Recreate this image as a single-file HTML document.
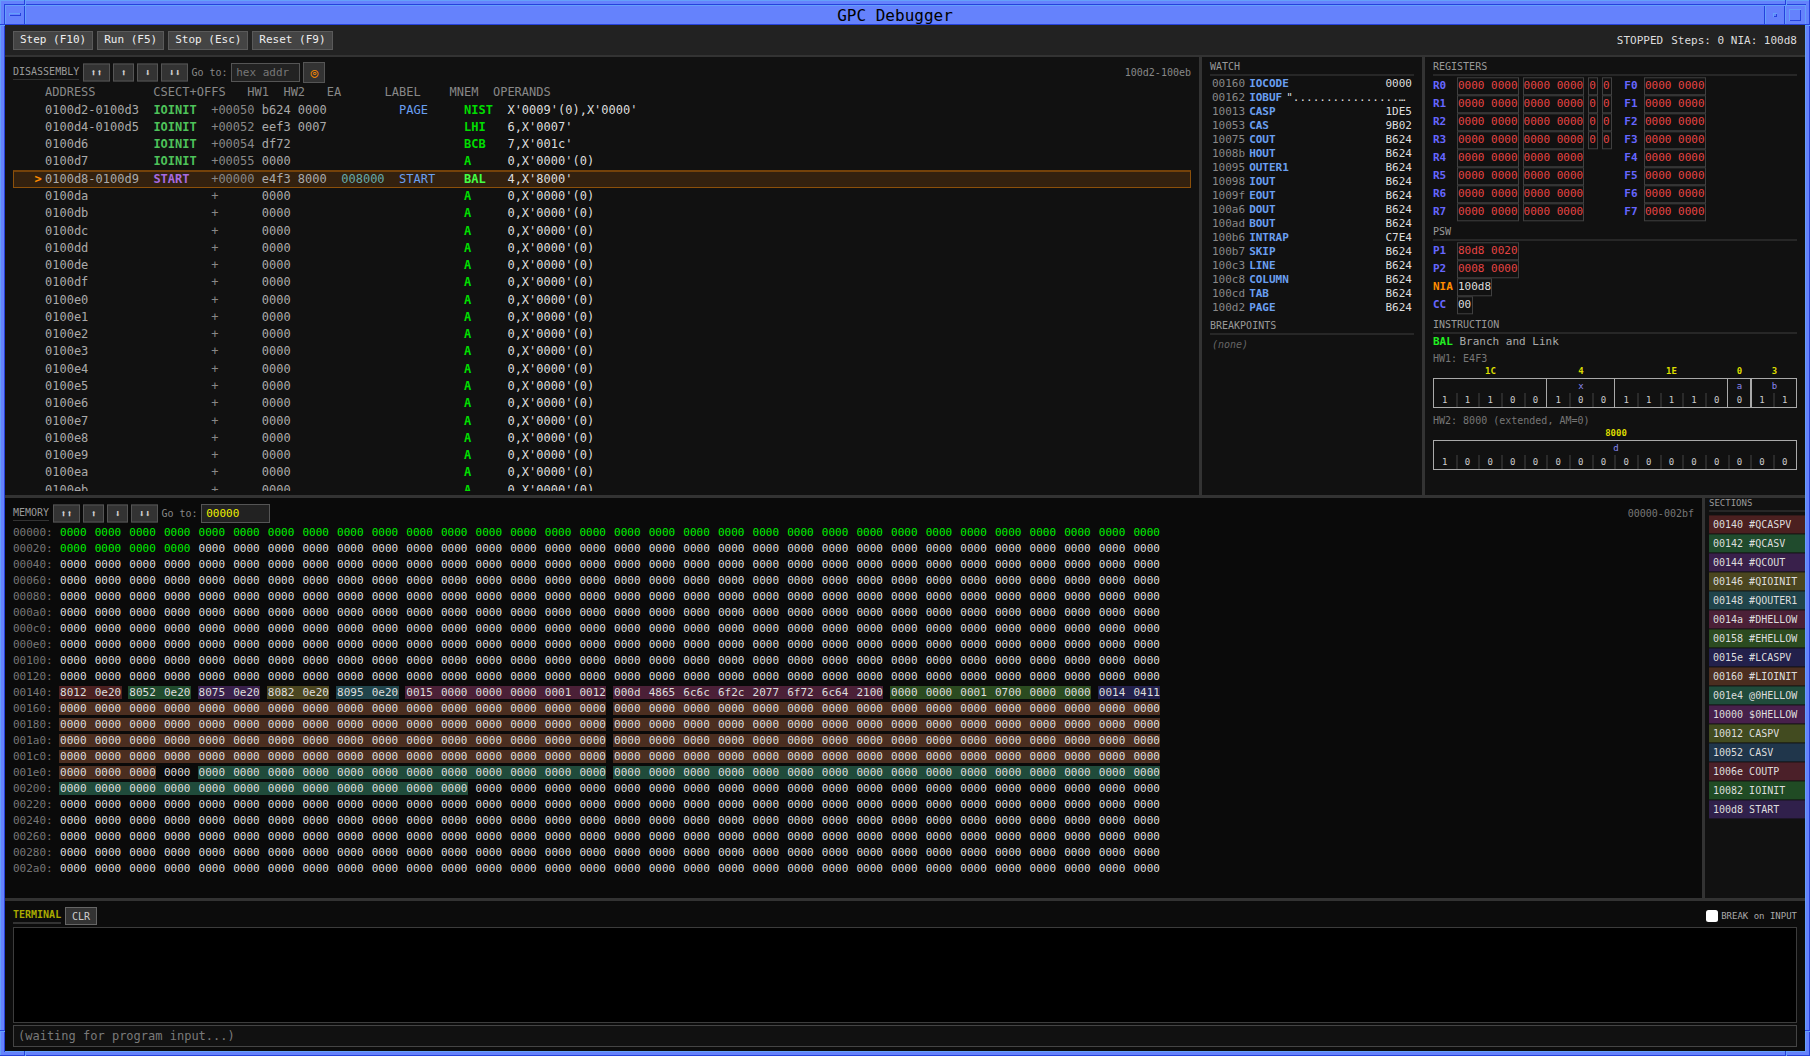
<!DOCTYPE html><html><head><meta charset="utf-8"><title>GPC Debugger</title><style>
*{box-sizing:border-box;margin:0;padding:0}
html,body{width:1810px;height:1056px;overflow:hidden}
body{background:#6582fc;font-family:"DejaVu Sans Mono","Liberation Mono",monospace;font-size:11px;color:#ddd;position:relative}
.abs{position:absolute}
/* window frame */
.fr{position:absolute}
#title{position:absolute;left:25px;top:6px;width:1740px;height:18px;line-height:20px;text-align:center;font-size:16px;color:#000;white-space:pre;overflow:hidden}
#app{position:absolute;left:5px;top:25px;width:1800px;height:1026px;background:#111;overflow:hidden}
#tb{position:absolute;left:0;top:0;width:1800px;height:32px;background:#222;border-bottom:2px solid #333}
.btn{position:absolute;top:6px;height:19px;line-height:15px;background:#444;border:1px solid #5a5a5a;color:#eee;font-size:11px;text-align:center;white-space:pre}
#status{position:absolute;right:8px;top:0;height:30px;line-height:32px;font-size:11px;color:#ddd;white-space:pre}
.pane{position:absolute;overflow:hidden;background:#111}
.ttl{position:absolute;font-size:10px;color:#999;white-space:pre;line-height:12px;margin-top:1px}
.ul{position:absolute;height:2px;background:#272727;margin-top:-1px}
.hp{transform:translateY(0.5px)}
.ul1{position:absolute;height:1px;background:#333}
.sb{position:absolute;height:18px;line-height:16px;background:#333;border:1px solid #555;color:#d0d0d0;font-size:10px;text-align:center;white-space:pre}
.lbl{position:absolute;font-size:10px;color:#888;white-space:pre;line-height:12px}
.inp{position:absolute;height:19px;line-height:17px;background:#222;border:1px solid #555;font-size:11px;color:#777;padding-left:4px;white-space:pre}
/* disassembly */
#dh{position:absolute;left:8px;top:27px;height:17px;line-height:17px;font-size:12px;color:#888;white-space:pre}
.dr{position:absolute;left:8px;width:1178px;height:17.28px;line-height:17.28px;font-size:12px;white-space:pre;color:#ccc}
.dr .t{position:absolute;left:32px;top:0}
.dr .m{position:absolute;left:21.5px;top:0;color:#ff8c00;font-weight:bold}
.a{color:#aaa}.o{color:#888}.h{color:#aaa}.ea{color:#6aa}.lb{color:#6a9ff0}.mn{color:#00dd00;font-weight:bold}.op{color:#ddd}
.cg{color:#4ec25a;font-weight:bold}.cp{color:#a76be0;font-weight:bold}
#cur{position:absolute;left:8px;top:113px;width:1178px;height:18px;background:#33210f;border:1px solid #8c500a;border-top:2px solid #74420a}
/* watch */
.wr{transform:translateY(0.3px);position:absolute;left:10px;width:200px;height:14px;line-height:14px;font-size:11px;white-space:pre}
.wa{color:#888}.wn{color:#6a9ff0;font-weight:bold}.wv{position:absolute;right:0;top:0;color:#ddd}
/* regs */
.rl{transform:translateY(0.3px);position:absolute;font-size:11px;font-weight:bold;color:#6666ff;line-height:18px;height:18px;white-space:pre}
.rb{transform:translateY(0.3px);position:absolute;height:18px;line-height:16px;border:1px solid #404040;color:#e64444;font-size:11px;white-space:pre;text-align:left;overflow:hidden}
.bt{position:absolute;border:1px solid #aaa}
.bv{position:absolute;font-size:9px;font-weight:bold;color:#dddd00;line-height:12px;text-align:center;white-space:pre}
.fn{position:absolute;font-size:9px;color:#8888ee;line-height:12px;text-align:center}
.bit{position:absolute;font-size:9px;color:#ccc;line-height:12px;text-align:center;width:22.66px}
.fs{position:absolute;width:1px;background:#aaa}
.tk{position:absolute;width:2px;background:#2a2a2a}
/* memory */
#mem{background:#0a0a0a}
.mr{position:absolute;left:8px;height:16px;line-height:16px;font-size:11px;white-space:pre;color:#ddd}
.ma{color:#777}
.w{padding:0 7.135px 0 1px;background-repeat:no-repeat}
.g{color:#00f000}
/* sections */
.sec{transform:translateY(0.4px);position:absolute;left:4px;width:110px;height:18px;line-height:20px;overflow:hidden;font-size:10px;color:#ddd;padding-left:4px;white-space:pre}
</style></head><body>
<div class="fr" style="left:0px;top:0px;width:1810px;height:1px;background:#64a0fa"></div>
<div class="fr" style="left:0px;top:0px;width:1px;height:1056px;background:#64a0fa"></div>
<div class="fr" style="left:1809px;top:0px;width:1px;height:1056px;background:#2642dc"></div>
<div class="fr" style="left:0px;top:1055px;width:1810px;height:1px;background:#2642dc"></div>
<div class="fr" style="left:4px;top:4px;width:1802px;height:1px;background:#2642dc"></div>
<div class="fr" style="left:4px;top:4px;width:1px;height:1048px;background:#2642dc"></div>
<div class="fr" style="left:1805px;top:5px;width:1px;height:1047px;background:#64a0fa"></div>
<div class="fr" style="left:5px;top:1051px;width:1801px;height:1px;background:#64a0fa"></div>
<div class="fr" style="left:5px;top:24px;width:1800px;height:1px;background:#2642dc"></div>
<div class="fr" style="left:0px;top:24px;width:5px;height:1px;background:#2642dc"></div>
<div class="fr" style="left:24px;top:0px;width:1px;height:5px;background:#2642dc"></div>
<div class="fr" style="left:1805px;top:24px;width:5px;height:1px;background:#2642dc"></div>
<div class="fr" style="left:1785px;top:0px;width:1px;height:5px;background:#2642dc"></div>
<div class="fr" style="left:0px;top:1030px;width:5px;height:1px;background:#2642dc"></div>
<div class="fr" style="left:0px;top:1031px;width:5px;height:1px;background:#64a0fa"></div>
<div class="fr" style="left:24px;top:1051px;width:1px;height:5px;background:#2642dc"></div>
<div class="fr" style="left:25px;top:1052px;width:1px;height:4px;background:#64a0fa"></div>
<div class="fr" style="left:1805px;top:1030px;width:5px;height:1px;background:#2642dc"></div>
<div class="fr" style="left:1806px;top:1031px;width:4px;height:1px;background:#64a0fa"></div>
<div class="fr" style="left:1785px;top:1051px;width:1px;height:5px;background:#2642dc"></div>
<div class="fr" style="left:1786px;top:1052px;width:1px;height:4px;background:#64a0fa"></div>
<div class="fr" style="left:0px;top:25px;width:5px;height:1px;background:#64a0fa"></div>
<div class="fr" style="left:25px;top:0px;width:1px;height:5px;background:#64a0fa"></div>
<div class="fr" style="left:1786px;top:0px;width:1px;height:5px;background:#64a0fa"></div>
<div class="fr" style="left:1806px;top:25px;width:4px;height:1px;background:#64a0fa"></div>
<div class="fr" style="left:24px;top:5px;width:1px;height:19px;background:#2642dc"></div>
<div class="fr" style="left:25px;top:5px;width:1px;height:19px;background:#64a0fa"></div>
<div class="fr" style="left:1764px;top:5px;width:1px;height:19px;background:#2642dc"></div>
<div class="fr" style="left:1765px;top:5px;width:1px;height:19px;background:#64a0fa"></div>
<div class="fr" style="left:1784px;top:5px;width:1px;height:19px;background:#2642dc"></div>
<div class="fr" style="left:1785px;top:5px;width:1px;height:19px;background:#64a0fa"></div>
<div class="fr" style="left:5px;top:5px;width:1800px;height:1px;background:#64a0fa"></div>
<div class="fr" style="left:5px;top:5px;width:1px;height:19px;background:#64a0fa"></div>
<div class="fr" style="left:9px;top:13px;width:11px;height:1px;background:#64a0fa"></div>
<div class="fr" style="left:9px;top:13px;width:1px;height:3px;background:#64a0fa"></div>
<div class="fr" style="left:10px;top:15px;width:11px;height:1px;background:#2642dc"></div>
<div class="fr" style="left:20px;top:13px;width:1px;height:3px;background:#2642dc"></div>
<div class="fr" style="left:1773px;top:13px;width:4px;height:1px;background:#64a0fa"></div>
<div class="fr" style="left:1773px;top:13px;width:1px;height:4px;background:#64a0fa"></div>
<div class="fr" style="left:1774px;top:16px;width:3px;height:1px;background:#2642dc"></div>
<div class="fr" style="left:1776px;top:14px;width:1px;height:3px;background:#2642dc"></div>
<div class="fr" style="left:1789px;top:9px;width:12px;height:1px;background:#64a0fa"></div>
<div class="fr" style="left:1789px;top:9px;width:1px;height:12px;background:#64a0fa"></div>
<div class="fr" style="left:1790px;top:20px;width:11px;height:1px;background:#2642dc"></div>
<div class="fr" style="left:1800px;top:10px;width:1px;height:11px;background:#2642dc"></div>
<div id="title">GPC Debugger</div>
<div id="app">
<div id="tb">
<div class="btn" style="left:8px;width:80.2px">Step (F10)</div>
<div class="btn" style="left:92.2px;width:67px">Run (F5)</div>
<div class="btn" style="left:163.2px;width:80.2px">Stop (Esc)</div>
<div class="btn" style="left:247.4px;width:80.2px">Reset (F9)</div>
<div id="status"><span style="margin-right:8px">STOPPED</span><span>Steps: 0 NIA: 100d8</span></div>
</div>
<div class="pane" id="dis" style="left:0;top:32px;width:1194px;height:438px">
<div class="ttl" style="left:8px;top:8px">DISASSEMBLY</div><div class="ul1" style="left:8px;top:22px;width:66px"></div>
<div class="sb hp" style="left:78px;top:6px;width:26.6px">⬆⬆</div>
<div class="sb hp" style="left:108.3px;top:6px;width:20.5px">⬆</div>
<div class="sb hp" style="left:132.2px;top:6px;width:20.5px">⬇</div>
<div class="sb hp" style="left:156.2px;top:6px;width:26.6px">⬇⬇</div>
<div class="lbl" style="left:186.5px;top:10px">Go to:</div>
<div class="inp" style="left:226.2px;top:6px;width:69px">hex addr</div>
<div class="sb" style="left:298.3px;top:5px;width:22px;height:21px;line-height:19px;color:#ff8c00;font-size:13px">◎</div>
<div class="lbl" style="right:8px;top:10px">100d2-100eb</div>
<div id="dh"><span style="position:absolute;left:32px">ADDRESS        CSECT+OFFS   HW1  HW2   EA      LABEL    MNEM  OPERANDS</span></div>
<div class="abs" style="left:0;top:0;width:1194px;height:434px;overflow:hidden">
<div id="cur"></div>
<div class="dr" style="top:44.60px"><span class="t"><span class="a">0100d2-0100d3  </span><span class="cg">IOINIT  </span><span class="o">+00050 </span><span class="h">b624 0000  </span><span class="ea">        </span><span class="lb">PAGE     </span><span class="mn">NIST  </span><span class="op">X'0009'(0),X'0000'</span></span></div>
<div class="dr" style="top:61.87px"><span class="t"><span class="a">0100d4-0100d5  </span><span class="cg">IOINIT  </span><span class="o">+00052 </span><span class="h">eef3 0007  </span><span class="ea">        </span><span class="lb">         </span><span class="mn">LHI   </span><span class="op">6,X'0007'</span></span></div>
<div class="dr" style="top:79.14px"><span class="t"><span class="a">0100d6         </span><span class="cg">IOINIT  </span><span class="o">+00054 </span><span class="h">df72       </span><span class="ea">        </span><span class="lb">         </span><span class="mn">BCB   </span><span class="op">7,X'001c'</span></span></div>
<div class="dr" style="top:96.42px"><span class="t"><span class="a">0100d7         </span><span class="cg">IOINIT  </span><span class="o">+00055 </span><span class="h">0000       </span><span class="ea">        </span><span class="lb">         </span><span class="mn">A     </span><span class="op">0,X'0000'(0)</span></span></div>
<div class="dr" style="top:113.69px"><span class="m">&gt;</span><span class="t"><span class="a">0100d8-0100d9  </span><span class="cp">START   </span><span class="o">+00000 </span><span class="h">e4f3 8000  </span><span class="ea">008000  </span><span class="lb">START    </span><span class="mn" style="color:#44ff44">BAL   </span><span class="op">4,X'8000'</span></span></div>
<div class="dr" style="top:130.96px"><span class="t"><span class="a">0100da         </span><span class="cg">        </span><span class="o">+      </span><span class="h">0000       </span><span class="ea">        </span><span class="lb">         </span><span class="mn">A     </span><span class="op">0,X'0000'(0)</span></span></div>
<div class="dr" style="top:148.23px"><span class="t"><span class="a">0100db         </span><span class="cg">        </span><span class="o">+      </span><span class="h">0000       </span><span class="ea">        </span><span class="lb">         </span><span class="mn">A     </span><span class="op">0,X'0000'(0)</span></span></div>
<div class="dr" style="top:165.50px"><span class="t"><span class="a">0100dc         </span><span class="cg">        </span><span class="o">+      </span><span class="h">0000       </span><span class="ea">        </span><span class="lb">         </span><span class="mn">A     </span><span class="op">0,X'0000'(0)</span></span></div>
<div class="dr" style="top:182.78px"><span class="t"><span class="a">0100dd         </span><span class="cg">        </span><span class="o">+      </span><span class="h">0000       </span><span class="ea">        </span><span class="lb">         </span><span class="mn">A     </span><span class="op">0,X'0000'(0)</span></span></div>
<div class="dr" style="top:200.05px"><span class="t"><span class="a">0100de         </span><span class="cg">        </span><span class="o">+      </span><span class="h">0000       </span><span class="ea">        </span><span class="lb">         </span><span class="mn">A     </span><span class="op">0,X'0000'(0)</span></span></div>
<div class="dr" style="top:217.32px"><span class="t"><span class="a">0100df         </span><span class="cg">        </span><span class="o">+      </span><span class="h">0000       </span><span class="ea">        </span><span class="lb">         </span><span class="mn">A     </span><span class="op">0,X'0000'(0)</span></span></div>
<div class="dr" style="top:234.59px"><span class="t"><span class="a">0100e0         </span><span class="cg">        </span><span class="o">+      </span><span class="h">0000       </span><span class="ea">        </span><span class="lb">         </span><span class="mn">A     </span><span class="op">0,X'0000'(0)</span></span></div>
<div class="dr" style="top:251.86px"><span class="t"><span class="a">0100e1         </span><span class="cg">        </span><span class="o">+      </span><span class="h">0000       </span><span class="ea">        </span><span class="lb">         </span><span class="mn">A     </span><span class="op">0,X'0000'(0)</span></span></div>
<div class="dr" style="top:269.14px"><span class="t"><span class="a">0100e2         </span><span class="cg">        </span><span class="o">+      </span><span class="h">0000       </span><span class="ea">        </span><span class="lb">         </span><span class="mn">A     </span><span class="op">0,X'0000'(0)</span></span></div>
<div class="dr" style="top:286.41px"><span class="t"><span class="a">0100e3         </span><span class="cg">        </span><span class="o">+      </span><span class="h">0000       </span><span class="ea">        </span><span class="lb">         </span><span class="mn">A     </span><span class="op">0,X'0000'(0)</span></span></div>
<div class="dr" style="top:303.68px"><span class="t"><span class="a">0100e4         </span><span class="cg">        </span><span class="o">+      </span><span class="h">0000       </span><span class="ea">        </span><span class="lb">         </span><span class="mn">A     </span><span class="op">0,X'0000'(0)</span></span></div>
<div class="dr" style="top:320.95px"><span class="t"><span class="a">0100e5         </span><span class="cg">        </span><span class="o">+      </span><span class="h">0000       </span><span class="ea">        </span><span class="lb">         </span><span class="mn">A     </span><span class="op">0,X'0000'(0)</span></span></div>
<div class="dr" style="top:338.22px"><span class="t"><span class="a">0100e6         </span><span class="cg">        </span><span class="o">+      </span><span class="h">0000       </span><span class="ea">        </span><span class="lb">         </span><span class="mn">A     </span><span class="op">0,X'0000'(0)</span></span></div>
<div class="dr" style="top:355.50px"><span class="t"><span class="a">0100e7         </span><span class="cg">        </span><span class="o">+      </span><span class="h">0000       </span><span class="ea">        </span><span class="lb">         </span><span class="mn">A     </span><span class="op">0,X'0000'(0)</span></span></div>
<div class="dr" style="top:372.77px"><span class="t"><span class="a">0100e8         </span><span class="cg">        </span><span class="o">+      </span><span class="h">0000       </span><span class="ea">        </span><span class="lb">         </span><span class="mn">A     </span><span class="op">0,X'0000'(0)</span></span></div>
<div class="dr" style="top:390.04px"><span class="t"><span class="a">0100e9         </span><span class="cg">        </span><span class="o">+      </span><span class="h">0000       </span><span class="ea">        </span><span class="lb">         </span><span class="mn">A     </span><span class="op">0,X'0000'(0)</span></span></div>
<div class="dr" style="top:407.31px"><span class="t"><span class="a">0100ea         </span><span class="cg">        </span><span class="o">+      </span><span class="h">0000       </span><span class="ea">        </span><span class="lb">         </span><span class="mn">A     </span><span class="op">0,X'0000'(0)</span></span></div>
<div class="dr" style="top:424.58px"><span class="t"><span class="a">0100eb         </span><span class="cg">        </span><span class="o">+      </span><span class="h">0000       </span><span class="ea">        </span><span class="lb">         </span><span class="mn">A     </span><span class="op">0,X'0000'(0)</span></span></div>
</div>
</div>
<div class="abs" style="left:1194px;top:32px;width:3px;height:438px;background:#333"></div>
<div class="abs" style="left:1417px;top:32px;width:3px;height:438px;background:#333"></div>
<div class="pane" id="watch" style="left:1197px;top:32px;width:220px;height:438px">
<div class="ttl" style="left:8px;top:3px">WATCH</div><div class="ul" style="left:8px;top:18px;width:204px"></div>
<div class="wr" style="top:20px"><span class="wa">00160</span><span class="wn" style="margin-left:4px">IOCODE</span><span class="wv">0000</span></div>
<div class="wr" style="top:34px"><span class="wa">00162</span><span class="wn" style="margin-left:4px">IOBUF</span><span style="color:#ddd;margin-left:4px">"................…</span></div>
<div class="wr" style="top:48px"><span class="wa">10013</span><span class="wn" style="margin-left:4px">CASP</span><span class="wv">1DE5</span></div>
<div class="wr" style="top:62px"><span class="wa">10053</span><span class="wn" style="margin-left:4px">CAS</span><span class="wv">9B02</span></div>
<div class="wr" style="top:76px"><span class="wa">10075</span><span class="wn" style="margin-left:4px">COUT</span><span class="wv">B624</span></div>
<div class="wr" style="top:90px"><span class="wa">1008b</span><span class="wn" style="margin-left:4px">HOUT</span><span class="wv">B624</span></div>
<div class="wr" style="top:104px"><span class="wa">10095</span><span class="wn" style="margin-left:4px">OUTER1</span><span class="wv">B624</span></div>
<div class="wr" style="top:118px"><span class="wa">10098</span><span class="wn" style="margin-left:4px">IOUT</span><span class="wv">B624</span></div>
<div class="wr" style="top:132px"><span class="wa">1009f</span><span class="wn" style="margin-left:4px">EOUT</span><span class="wv">B624</span></div>
<div class="wr" style="top:146px"><span class="wa">100a6</span><span class="wn" style="margin-left:4px">DOUT</span><span class="wv">B624</span></div>
<div class="wr" style="top:160px"><span class="wa">100ad</span><span class="wn" style="margin-left:4px">BOUT</span><span class="wv">B624</span></div>
<div class="wr" style="top:174px"><span class="wa">100b6</span><span class="wn" style="margin-left:4px">INTRAP</span><span class="wv">C7E4</span></div>
<div class="wr" style="top:188px"><span class="wa">100b7</span><span class="wn" style="margin-left:4px">SKIP</span><span class="wv">B624</span></div>
<div class="wr" style="top:202px"><span class="wa">100c3</span><span class="wn" style="margin-left:4px">LINE</span><span class="wv">B624</span></div>
<div class="wr" style="top:216px"><span class="wa">100c8</span><span class="wn" style="margin-left:4px">COLUMN</span><span class="wv">B624</span></div>
<div class="wr" style="top:230px"><span class="wa">100cd</span><span class="wn" style="margin-left:4px">TAB</span><span class="wv">B624</span></div>
<div class="wr" style="top:244px"><span class="wa">100d2</span><span class="wn" style="margin-left:4px">PAGE</span><span class="wv">B624</span></div>
<div class="ttl" style="left:8px;top:262px">BREAKPOINTS</div><div class="ul" style="left:8px;top:277px;width:204px"></div>
<div class="abs" style="left:10px;top:282px;font-size:10px;color:#666;font-style:italic;line-height:12px">(none)</div>
</div>
<div class="pane" id="regs" style="left:1420px;top:32px;width:380px;height:438px">
<div class="ttl" style="left:8px;top:3px">REGISTERS</div><div class="ul" style="left:8px;top:18px;width:364px"></div>
<div class="rl" style="left:8px;top:20px">R0</div>
<div class="rb" style="left:32px;top:20px;width:61.6px">0000 0000</div>
<div class="rb" style="left:97.6px;top:20px;width:61.6px">0000 0000</div>
<div class="rb" style="left:163.2px;top:20px;width:9.7px">0</div>
<div class="rb" style="left:177px;top:20px;width:9.7px">0</div>
<div class="rl" style="left:199.3px;top:20px">F0</div>
<div class="rb" style="left:219px;top:20px;width:61.6px">0000 0000</div>
<div class="rl" style="left:8px;top:38px">R1</div>
<div class="rb" style="left:32px;top:38px;width:61.6px">0000 0000</div>
<div class="rb" style="left:97.6px;top:38px;width:61.6px">0000 0000</div>
<div class="rb" style="left:163.2px;top:38px;width:9.7px">0</div>
<div class="rb" style="left:177px;top:38px;width:9.7px">0</div>
<div class="rl" style="left:199.3px;top:38px">F1</div>
<div class="rb" style="left:219px;top:38px;width:61.6px">0000 0000</div>
<div class="rl" style="left:8px;top:56px">R2</div>
<div class="rb" style="left:32px;top:56px;width:61.6px">0000 0000</div>
<div class="rb" style="left:97.6px;top:56px;width:61.6px">0000 0000</div>
<div class="rb" style="left:163.2px;top:56px;width:9.7px">0</div>
<div class="rb" style="left:177px;top:56px;width:9.7px">0</div>
<div class="rl" style="left:199.3px;top:56px">F2</div>
<div class="rb" style="left:219px;top:56px;width:61.6px">0000 0000</div>
<div class="rl" style="left:8px;top:74px">R3</div>
<div class="rb" style="left:32px;top:74px;width:61.6px">0000 0000</div>
<div class="rb" style="left:97.6px;top:74px;width:61.6px">0000 0000</div>
<div class="rb" style="left:163.2px;top:74px;width:9.7px">0</div>
<div class="rb" style="left:177px;top:74px;width:9.7px">0</div>
<div class="rl" style="left:199.3px;top:74px">F3</div>
<div class="rb" style="left:219px;top:74px;width:61.6px">0000 0000</div>
<div class="rl" style="left:8px;top:92px">R4</div>
<div class="rb" style="left:32px;top:92px;width:61.6px">0000 0000</div>
<div class="rb" style="left:97.6px;top:92px;width:61.6px">0000 0000</div>
<div class="rl" style="left:199.3px;top:92px">F4</div>
<div class="rb" style="left:219px;top:92px;width:61.6px">0000 0000</div>
<div class="rl" style="left:8px;top:110px">R5</div>
<div class="rb" style="left:32px;top:110px;width:61.6px">0000 0000</div>
<div class="rb" style="left:97.6px;top:110px;width:61.6px">0000 0000</div>
<div class="rl" style="left:199.3px;top:110px">F5</div>
<div class="rb" style="left:219px;top:110px;width:61.6px">0000 0000</div>
<div class="rl" style="left:8px;top:128px">R6</div>
<div class="rb" style="left:32px;top:128px;width:61.6px">0000 0000</div>
<div class="rb" style="left:97.6px;top:128px;width:61.6px">0000 0000</div>
<div class="rl" style="left:199.3px;top:128px">F6</div>
<div class="rb" style="left:219px;top:128px;width:61.6px">0000 0000</div>
<div class="rl" style="left:8px;top:146px">R7</div>
<div class="rb" style="left:32px;top:146px;width:61.6px">0000 0000</div>
<div class="rb" style="left:97.6px;top:146px;width:61.6px">0000 0000</div>
<div class="rl" style="left:199.3px;top:146px">F7</div>
<div class="rb" style="left:219px;top:146px;width:61.6px">0000 0000</div>
<div class="ttl" style="left:8px;top:168px">PSW</div><div class="ul" style="left:8px;top:183px;width:364px"></div>
<div class="rl" style="left:8px;top:185px">P1</div><div class="rb" style="left:32px;top:185px;width:61.6px">80d8 0020</div>
<div class="rl" style="left:8px;top:203px">P2</div><div class="rb" style="left:32px;top:203px;width:61.6px">0008 0000</div>
<div class="rl" style="left:8px;top:221px;color:#ff8c00">NIA</div><div class="rb" style="left:32px;top:221px;width:35.1px;color:#ddd">100d8</div>
<div class="rl" style="left:8px;top:239px">CC</div><div class="rb" style="left:32px;top:239px;width:16px;color:#ddd">00</div>
<div class="ttl" style="left:8px;top:261px">INSTRUCTION</div><div class="ul" style="left:8px;top:276px;width:364px"></div>
<div class="abs" style="left:8px;top:278px;font-size:11px;line-height:14px;white-space:pre;color:#aaa"><b style="color:#22ee22">BAL</b> Branch and Link</div>
<div class="lbl" style="left:8px;top:295.5px;color:#777">HW1: E4F3</div>
<div class="bt" style="left:8px;top:321px;width:364px;height:30px"></div>
<div class="bv" style="left:9.50px;top:307.5px;width:112.00px">1C</div>
<div class="fs" style="left:121px;top:321px;height:30px"></div>
<div class="bv" style="left:122.50px;top:307.5px;width:67.00px">4</div>
<div class="fn" style="left:122.50px;top:322.5px;width:67.00px">x</div>
<div class="fs" style="left:189px;top:321px;height:30px"></div>
<div class="bv" style="left:190.50px;top:307.5px;width:112.00px">1E</div>
<div class="fs" style="left:302px;top:321px;height:30px"></div>
<div class="bv" style="left:303.50px;top:307.5px;width:22.00px">0</div>
<div class="fn" style="left:303.50px;top:322.5px;width:22.00px">a</div>
<div class="fs" style="left:325px;top:321px;height:30px;width:2px"></div>
<div class="bv" style="left:326.50px;top:307.5px;width:46.00px">3</div>
<div class="fn" style="left:326.50px;top:322.5px;width:46.00px">b</div>
<div class="bit" style="left:8.50px;top:337px">1</div>
<div class="tk" style="left:31px;top:336px;height:14px"></div>
<div class="bit" style="left:31.16px;top:337px">1</div>
<div class="tk" style="left:53px;top:336px;height:14px"></div>
<div class="bit" style="left:53.82px;top:337px">1</div>
<div class="tk" style="left:76px;top:336px;height:14px"></div>
<div class="bit" style="left:76.48px;top:337px">0</div>
<div class="tk" style="left:99px;top:336px;height:14px"></div>
<div class="bit" style="left:99.14px;top:337px">0</div>
<div class="bit" style="left:121.80px;top:337px">1</div>
<div class="tk" style="left:144px;top:336px;height:14px"></div>
<div class="bit" style="left:144.46px;top:337px">0</div>
<div class="tk" style="left:167px;top:336px;height:14px"></div>
<div class="bit" style="left:167.12px;top:337px">0</div>
<div class="bit" style="left:189.78px;top:337px">1</div>
<div class="tk" style="left:212px;top:336px;height:14px"></div>
<div class="bit" style="left:212.44px;top:337px">1</div>
<div class="tk" style="left:235px;top:336px;height:14px"></div>
<div class="bit" style="left:235.10px;top:337px">1</div>
<div class="tk" style="left:257px;top:336px;height:14px"></div>
<div class="bit" style="left:257.76px;top:337px">1</div>
<div class="tk" style="left:280px;top:336px;height:14px"></div>
<div class="bit" style="left:280.42px;top:337px">0</div>
<div class="bit" style="left:303.08px;top:337px">0</div>
<div class="bit" style="left:325.74px;top:337px">1</div>
<div class="tk" style="left:348px;top:336px;height:14px"></div>
<div class="bit" style="left:348.40px;top:337px">1</div>
<div class="lbl" style="left:8px;top:358px;color:#777">HW2: 8000 (extended, AM=0)</div>
<div class="bt" style="left:8px;top:383px;width:364px;height:30px"></div>
<div class="bv" style="left:9.50px;top:369.5px;width:363.00px">8000</div>
<div class="fn" style="left:9.50px;top:384.5px;width:363.00px">d</div>
<div class="bit" style="left:8.50px;top:399px">1</div>
<div class="tk" style="left:31px;top:398px;height:14px"></div>
<div class="bit" style="left:31.16px;top:399px">0</div>
<div class="tk" style="left:53px;top:398px;height:14px"></div>
<div class="bit" style="left:53.82px;top:399px">0</div>
<div class="tk" style="left:76px;top:398px;height:14px"></div>
<div class="bit" style="left:76.48px;top:399px">0</div>
<div class="tk" style="left:99px;top:398px;height:14px"></div>
<div class="bit" style="left:99.14px;top:399px">0</div>
<div class="tk" style="left:121px;top:398px;height:14px"></div>
<div class="bit" style="left:121.80px;top:399px">0</div>
<div class="tk" style="left:144px;top:398px;height:14px"></div>
<div class="bit" style="left:144.46px;top:399px">0</div>
<div class="tk" style="left:167px;top:398px;height:14px"></div>
<div class="bit" style="left:167.12px;top:399px">0</div>
<div class="tk" style="left:189px;top:398px;height:14px"></div>
<div class="bit" style="left:189.78px;top:399px">0</div>
<div class="tk" style="left:212px;top:398px;height:14px"></div>
<div class="bit" style="left:212.44px;top:399px">0</div>
<div class="tk" style="left:235px;top:398px;height:14px"></div>
<div class="bit" style="left:235.10px;top:399px">0</div>
<div class="tk" style="left:257px;top:398px;height:14px"></div>
<div class="bit" style="left:257.76px;top:399px">0</div>
<div class="tk" style="left:280px;top:398px;height:14px"></div>
<div class="bit" style="left:280.42px;top:399px">0</div>
<div class="tk" style="left:303px;top:398px;height:14px"></div>
<div class="bit" style="left:303.08px;top:399px">0</div>
<div class="tk" style="left:325px;top:398px;height:14px"></div>
<div class="bit" style="left:325.74px;top:399px">0</div>
<div class="tk" style="left:348px;top:398px;height:14px"></div>
<div class="bit" style="left:348.40px;top:399px">0</div>
</div>
<div class="abs" style="left:0;top:470px;width:1800px;height:3px;background:#333"></div>
<div class="pane" id="mem" style="left:0;top:473px;width:1697px;height:400px">
<div class="ttl" style="left:8px;top:8px">MEMORY</div><div class="ul1" style="left:8px;top:22px;width:36px"></div>
<div class="sb hp" style="left:48px;top:6px;width:26.6px">⬆⬆</div>
<div class="sb hp" style="left:78.3px;top:6px;width:20.5px">⬆</div>
<div class="sb hp" style="left:102.2px;top:6px;width:20.5px">⬇</div>
<div class="sb hp" style="left:126.2px;top:6px;width:26.6px">⬇⬇</div>
<div class="lbl" style="left:156.5px;top:10px">Go to:</div>
<div class="inp" style="left:196.2px;top:6px;width:69px;color:#eeee00">00000</div>
<div class="lbl" style="right:8px;top:10px;color:#777">00000-002bf</div>
<div class="mr" style="top:26.5px"><span class="ma">00000:</span><span style="padding-right:6.3px"></span><span class="w g">0000</span><span class="w g">0000</span><span class="w g">0000</span><span class="w g">0000</span><span class="w g">0000</span><span class="w g">0000</span><span class="w g">0000</span><span class="w g">0000</span><span class="w g">0000</span><span class="w g">0000</span><span class="w g">0000</span><span class="w g">0000</span><span class="w g">0000</span><span class="w g">0000</span><span class="w g">0000</span><span class="w g">0000</span><span class="w g">0000</span><span class="w g">0000</span><span class="w g">0000</span><span class="w g">0000</span><span class="w g">0000</span><span class="w g">0000</span><span class="w g">0000</span><span class="w g">0000</span><span class="w g">0000</span><span class="w g">0000</span><span class="w g">0000</span><span class="w g">0000</span><span class="w g">0000</span><span class="w g">0000</span><span class="w g">0000</span><span class="w g">0000</span></div>
<div class="mr" style="top:42.5px"><span class="ma">00020:</span><span style="padding-right:6.3px"></span><span class="w g">0000</span><span class="w g">0000</span><span class="w g">0000</span><span class="w g">0000</span><span class="w">0000</span><span class="w">0000</span><span class="w">0000</span><span class="w">0000</span><span class="w">0000</span><span class="w">0000</span><span class="w">0000</span><span class="w">0000</span><span class="w">0000</span><span class="w">0000</span><span class="w">0000</span><span class="w">0000</span><span class="w">0000</span><span class="w">0000</span><span class="w">0000</span><span class="w">0000</span><span class="w">0000</span><span class="w">0000</span><span class="w">0000</span><span class="w">0000</span><span class="w">0000</span><span class="w">0000</span><span class="w">0000</span><span class="w">0000</span><span class="w">0000</span><span class="w">0000</span><span class="w">0000</span><span class="w">0000</span></div>
<div class="mr" style="top:58.5px"><span class="ma">00040:</span><span style="padding-right:6.3px"></span><span class="w">0000</span><span class="w">0000</span><span class="w">0000</span><span class="w">0000</span><span class="w">0000</span><span class="w">0000</span><span class="w">0000</span><span class="w">0000</span><span class="w">0000</span><span class="w">0000</span><span class="w">0000</span><span class="w">0000</span><span class="w">0000</span><span class="w">0000</span><span class="w">0000</span><span class="w">0000</span><span class="w">0000</span><span class="w">0000</span><span class="w">0000</span><span class="w">0000</span><span class="w">0000</span><span class="w">0000</span><span class="w">0000</span><span class="w">0000</span><span class="w">0000</span><span class="w">0000</span><span class="w">0000</span><span class="w">0000</span><span class="w">0000</span><span class="w">0000</span><span class="w">0000</span><span class="w">0000</span></div>
<div class="mr" style="top:74.5px"><span class="ma">00060:</span><span style="padding-right:6.3px"></span><span class="w">0000</span><span class="w">0000</span><span class="w">0000</span><span class="w">0000</span><span class="w">0000</span><span class="w">0000</span><span class="w">0000</span><span class="w">0000</span><span class="w">0000</span><span class="w">0000</span><span class="w">0000</span><span class="w">0000</span><span class="w">0000</span><span class="w">0000</span><span class="w">0000</span><span class="w">0000</span><span class="w">0000</span><span class="w">0000</span><span class="w">0000</span><span class="w">0000</span><span class="w">0000</span><span class="w">0000</span><span class="w">0000</span><span class="w">0000</span><span class="w">0000</span><span class="w">0000</span><span class="w">0000</span><span class="w">0000</span><span class="w">0000</span><span class="w">0000</span><span class="w">0000</span><span class="w">0000</span></div>
<div class="mr" style="top:90.5px"><span class="ma">00080:</span><span style="padding-right:6.3px"></span><span class="w">0000</span><span class="w">0000</span><span class="w">0000</span><span class="w">0000</span><span class="w">0000</span><span class="w">0000</span><span class="w">0000</span><span class="w">0000</span><span class="w">0000</span><span class="w">0000</span><span class="w">0000</span><span class="w">0000</span><span class="w">0000</span><span class="w">0000</span><span class="w">0000</span><span class="w">0000</span><span class="w">0000</span><span class="w">0000</span><span class="w">0000</span><span class="w">0000</span><span class="w">0000</span><span class="w">0000</span><span class="w">0000</span><span class="w">0000</span><span class="w">0000</span><span class="w">0000</span><span class="w">0000</span><span class="w">0000</span><span class="w">0000</span><span class="w">0000</span><span class="w">0000</span><span class="w">0000</span></div>
<div class="mr" style="top:106.5px"><span class="ma">000a0:</span><span style="padding-right:6.3px"></span><span class="w">0000</span><span class="w">0000</span><span class="w">0000</span><span class="w">0000</span><span class="w">0000</span><span class="w">0000</span><span class="w">0000</span><span class="w">0000</span><span class="w">0000</span><span class="w">0000</span><span class="w">0000</span><span class="w">0000</span><span class="w">0000</span><span class="w">0000</span><span class="w">0000</span><span class="w">0000</span><span class="w">0000</span><span class="w">0000</span><span class="w">0000</span><span class="w">0000</span><span class="w">0000</span><span class="w">0000</span><span class="w">0000</span><span class="w">0000</span><span class="w">0000</span><span class="w">0000</span><span class="w">0000</span><span class="w">0000</span><span class="w">0000</span><span class="w">0000</span><span class="w">0000</span><span class="w">0000</span></div>
<div class="mr" style="top:122.5px"><span class="ma">000c0:</span><span style="padding-right:6.3px"></span><span class="w">0000</span><span class="w">0000</span><span class="w">0000</span><span class="w">0000</span><span class="w">0000</span><span class="w">0000</span><span class="w">0000</span><span class="w">0000</span><span class="w">0000</span><span class="w">0000</span><span class="w">0000</span><span class="w">0000</span><span class="w">0000</span><span class="w">0000</span><span class="w">0000</span><span class="w">0000</span><span class="w">0000</span><span class="w">0000</span><span class="w">0000</span><span class="w">0000</span><span class="w">0000</span><span class="w">0000</span><span class="w">0000</span><span class="w">0000</span><span class="w">0000</span><span class="w">0000</span><span class="w">0000</span><span class="w">0000</span><span class="w">0000</span><span class="w">0000</span><span class="w">0000</span><span class="w">0000</span></div>
<div class="mr" style="top:138.5px"><span class="ma">000e0:</span><span style="padding-right:6.3px"></span><span class="w">0000</span><span class="w">0000</span><span class="w">0000</span><span class="w">0000</span><span class="w">0000</span><span class="w">0000</span><span class="w">0000</span><span class="w">0000</span><span class="w">0000</span><span class="w">0000</span><span class="w">0000</span><span class="w">0000</span><span class="w">0000</span><span class="w">0000</span><span class="w">0000</span><span class="w">0000</span><span class="w">0000</span><span class="w">0000</span><span class="w">0000</span><span class="w">0000</span><span class="w">0000</span><span class="w">0000</span><span class="w">0000</span><span class="w">0000</span><span class="w">0000</span><span class="w">0000</span><span class="w">0000</span><span class="w">0000</span><span class="w">0000</span><span class="w">0000</span><span class="w">0000</span><span class="w">0000</span></div>
<div class="mr" style="top:154.5px"><span class="ma">00100:</span><span style="padding-right:6.3px"></span><span class="w">0000</span><span class="w">0000</span><span class="w">0000</span><span class="w">0000</span><span class="w">0000</span><span class="w">0000</span><span class="w">0000</span><span class="w">0000</span><span class="w">0000</span><span class="w">0000</span><span class="w">0000</span><span class="w">0000</span><span class="w">0000</span><span class="w">0000</span><span class="w">0000</span><span class="w">0000</span><span class="w">0000</span><span class="w">0000</span><span class="w">0000</span><span class="w">0000</span><span class="w">0000</span><span class="w">0000</span><span class="w">0000</span><span class="w">0000</span><span class="w">0000</span><span class="w">0000</span><span class="w">0000</span><span class="w">0000</span><span class="w">0000</span><span class="w">0000</span><span class="w">0000</span><span class="w">0000</span></div>
<div class="mr" style="top:170.5px"><span class="ma">00120:</span><span style="padding-right:6.3px"></span><span class="w">0000</span><span class="w">0000</span><span class="w">0000</span><span class="w">0000</span><span class="w">0000</span><span class="w">0000</span><span class="w">0000</span><span class="w">0000</span><span class="w">0000</span><span class="w">0000</span><span class="w">0000</span><span class="w">0000</span><span class="w">0000</span><span class="w">0000</span><span class="w">0000</span><span class="w">0000</span><span class="w">0000</span><span class="w">0000</span><span class="w">0000</span><span class="w">0000</span><span class="w">0000</span><span class="w">0000</span><span class="w">0000</span><span class="w">0000</span><span class="w">0000</span><span class="w">0000</span><span class="w">0000</span><span class="w">0000</span><span class="w">0000</span><span class="w">0000</span><span class="w">0000</span><span class="w">0000</span></div>
<div class="mr" style="top:186.5px"><span class="ma">00140:</span><span style="padding-right:6.3px"></span><span class="w" style="background:hsl(0,40%,21%)">8012</span><span class="w" style="background-image:linear-gradient(hsl(0,40%,21%),hsl(0,40%,21%));background-size:28.48px 100%">0e20</span><span class="w" style="background:hsl(137.5,40%,21%)">8052</span><span class="w" style="background-image:linear-gradient(hsl(137.5,40%,21%),hsl(137.5,40%,21%));background-size:28.48px 100%">0e20</span><span class="w" style="background:hsl(275,40%,21%)">8075</span><span class="w" style="background-image:linear-gradient(hsl(275,40%,21%),hsl(275,40%,21%));background-size:28.48px 100%">0e20</span><span class="w" style="background:hsl(52.5,40%,21%)">8082</span><span class="w" style="background-image:linear-gradient(hsl(52.5,40%,21%),hsl(52.5,40%,21%));background-size:28.48px 100%">0e20</span><span class="w" style="background:hsl(190,40%,21%)">8095</span><span class="w" style="background-image:linear-gradient(hsl(190,40%,21%),hsl(190,40%,21%));background-size:28.48px 100%">0e20</span><span class="w" style="background:hsl(327.5,40%,21%)">0015</span><span class="w" style="background:hsl(327.5,40%,21%)">0000</span><span class="w" style="background:hsl(327.5,40%,21%)">0000</span><span class="w" style="background:hsl(327.5,40%,21%)">0000</span><span class="w" style="background:hsl(327.5,40%,21%)">0001</span><span class="w" style="background-image:linear-gradient(hsl(327.5,40%,21%),hsl(327.5,40%,21%));background-size:28.48px 100%">0012</span><span class="w" style="background:hsl(327.5,40%,21%)">000d</span><span class="w" style="background:hsl(327.5,40%,21%)">4865</span><span class="w" style="background:hsl(327.5,40%,21%)">6c6c</span><span class="w" style="background:hsl(327.5,40%,21%)">6f2c</span><span class="w" style="background:hsl(327.5,40%,21%)">2077</span><span class="w" style="background:hsl(327.5,40%,21%)">6f72</span><span class="w" style="background:hsl(327.5,40%,21%)">6c64</span><span class="w" style="background-image:linear-gradient(hsl(327.5,40%,21%),hsl(327.5,40%,21%));background-size:28.48px 100%">2100</span><span class="w" style="background:hsl(105,40%,21%)">0000</span><span class="w" style="background:hsl(105,40%,21%)">0000</span><span class="w" style="background:hsl(105,40%,21%)">0001</span><span class="w" style="background:hsl(105,40%,21%)">0700</span><span class="w" style="background:hsl(105,40%,21%)">0000</span><span class="w" style="background-image:linear-gradient(hsl(105,40%,21%),hsl(105,40%,21%));background-size:28.48px 100%">0000</span><span class="w" style="background:hsl(242.5,40%,21%)">0014</span><span class="w" style="background-image:linear-gradient(hsl(242.5,40%,21%),hsl(242.5,40%,21%));background-size:28.48px 100%">0411</span></div>
<div class="mr" style="top:202.5px"><span class="ma">00160:</span><span style="padding-right:6.3px"></span><span class="w" style="background:hsl(20,40%,21%)">0000</span><span class="w" style="background:hsl(20,40%,21%)">0000</span><span class="w" style="background:hsl(20,40%,21%)">0000</span><span class="w" style="background:hsl(20,40%,21%)">0000</span><span class="w" style="background:hsl(20,40%,21%)">0000</span><span class="w" style="background:hsl(20,40%,21%)">0000</span><span class="w" style="background:hsl(20,40%,21%)">0000</span><span class="w" style="background:hsl(20,40%,21%)">0000</span><span class="w" style="background:hsl(20,40%,21%)">0000</span><span class="w" style="background:hsl(20,40%,21%)">0000</span><span class="w" style="background:hsl(20,40%,21%)">0000</span><span class="w" style="background:hsl(20,40%,21%)">0000</span><span class="w" style="background:hsl(20,40%,21%)">0000</span><span class="w" style="background:hsl(20,40%,21%)">0000</span><span class="w" style="background:hsl(20,40%,21%)">0000</span><span class="w" style="background-image:linear-gradient(hsl(20,40%,21%),hsl(20,40%,21%));background-size:28.48px 100%">0000</span><span class="w" style="background:hsl(20,40%,21%)">0000</span><span class="w" style="background:hsl(20,40%,21%)">0000</span><span class="w" style="background:hsl(20,40%,21%)">0000</span><span class="w" style="background:hsl(20,40%,21%)">0000</span><span class="w" style="background:hsl(20,40%,21%)">0000</span><span class="w" style="background:hsl(20,40%,21%)">0000</span><span class="w" style="background:hsl(20,40%,21%)">0000</span><span class="w" style="background:hsl(20,40%,21%)">0000</span><span class="w" style="background:hsl(20,40%,21%)">0000</span><span class="w" style="background:hsl(20,40%,21%)">0000</span><span class="w" style="background:hsl(20,40%,21%)">0000</span><span class="w" style="background:hsl(20,40%,21%)">0000</span><span class="w" style="background:hsl(20,40%,21%)">0000</span><span class="w" style="background:hsl(20,40%,21%)">0000</span><span class="w" style="background:hsl(20,40%,21%)">0000</span><span class="w" style="background-image:linear-gradient(hsl(20,40%,21%),hsl(20,40%,21%));background-size:28.48px 100%">0000</span></div>
<div class="mr" style="top:218.5px"><span class="ma">00180:</span><span style="padding-right:6.3px"></span><span class="w" style="background:hsl(20,40%,21%)">0000</span><span class="w" style="background:hsl(20,40%,21%)">0000</span><span class="w" style="background:hsl(20,40%,21%)">0000</span><span class="w" style="background:hsl(20,40%,21%)">0000</span><span class="w" style="background:hsl(20,40%,21%)">0000</span><span class="w" style="background:hsl(20,40%,21%)">0000</span><span class="w" style="background:hsl(20,40%,21%)">0000</span><span class="w" style="background:hsl(20,40%,21%)">0000</span><span class="w" style="background:hsl(20,40%,21%)">0000</span><span class="w" style="background:hsl(20,40%,21%)">0000</span><span class="w" style="background:hsl(20,40%,21%)">0000</span><span class="w" style="background:hsl(20,40%,21%)">0000</span><span class="w" style="background:hsl(20,40%,21%)">0000</span><span class="w" style="background:hsl(20,40%,21%)">0000</span><span class="w" style="background:hsl(20,40%,21%)">0000</span><span class="w" style="background-image:linear-gradient(hsl(20,40%,21%),hsl(20,40%,21%));background-size:28.48px 100%">0000</span><span class="w" style="background:hsl(20,40%,21%)">0000</span><span class="w" style="background:hsl(20,40%,21%)">0000</span><span class="w" style="background:hsl(20,40%,21%)">0000</span><span class="w" style="background:hsl(20,40%,21%)">0000</span><span class="w" style="background:hsl(20,40%,21%)">0000</span><span class="w" style="background:hsl(20,40%,21%)">0000</span><span class="w" style="background:hsl(20,40%,21%)">0000</span><span class="w" style="background:hsl(20,40%,21%)">0000</span><span class="w" style="background:hsl(20,40%,21%)">0000</span><span class="w" style="background:hsl(20,40%,21%)">0000</span><span class="w" style="background:hsl(20,40%,21%)">0000</span><span class="w" style="background:hsl(20,40%,21%)">0000</span><span class="w" style="background:hsl(20,40%,21%)">0000</span><span class="w" style="background:hsl(20,40%,21%)">0000</span><span class="w" style="background:hsl(20,40%,21%)">0000</span><span class="w" style="background-image:linear-gradient(hsl(20,40%,21%),hsl(20,40%,21%));background-size:28.48px 100%">0000</span></div>
<div class="mr" style="top:234.5px"><span class="ma">001a0:</span><span style="padding-right:6.3px"></span><span class="w" style="background:hsl(20,40%,21%)">0000</span><span class="w" style="background:hsl(20,40%,21%)">0000</span><span class="w" style="background:hsl(20,40%,21%)">0000</span><span class="w" style="background:hsl(20,40%,21%)">0000</span><span class="w" style="background:hsl(20,40%,21%)">0000</span><span class="w" style="background:hsl(20,40%,21%)">0000</span><span class="w" style="background:hsl(20,40%,21%)">0000</span><span class="w" style="background:hsl(20,40%,21%)">0000</span><span class="w" style="background:hsl(20,40%,21%)">0000</span><span class="w" style="background:hsl(20,40%,21%)">0000</span><span class="w" style="background:hsl(20,40%,21%)">0000</span><span class="w" style="background:hsl(20,40%,21%)">0000</span><span class="w" style="background:hsl(20,40%,21%)">0000</span><span class="w" style="background:hsl(20,40%,21%)">0000</span><span class="w" style="background:hsl(20,40%,21%)">0000</span><span class="w" style="background-image:linear-gradient(hsl(20,40%,21%),hsl(20,40%,21%));background-size:28.48px 100%">0000</span><span class="w" style="background:hsl(20,40%,21%)">0000</span><span class="w" style="background:hsl(20,40%,21%)">0000</span><span class="w" style="background:hsl(20,40%,21%)">0000</span><span class="w" style="background:hsl(20,40%,21%)">0000</span><span class="w" style="background:hsl(20,40%,21%)">0000</span><span class="w" style="background:hsl(20,40%,21%)">0000</span><span class="w" style="background:hsl(20,40%,21%)">0000</span><span class="w" style="background:hsl(20,40%,21%)">0000</span><span class="w" style="background:hsl(20,40%,21%)">0000</span><span class="w" style="background:hsl(20,40%,21%)">0000</span><span class="w" style="background:hsl(20,40%,21%)">0000</span><span class="w" style="background:hsl(20,40%,21%)">0000</span><span class="w" style="background:hsl(20,40%,21%)">0000</span><span class="w" style="background:hsl(20,40%,21%)">0000</span><span class="w" style="background:hsl(20,40%,21%)">0000</span><span class="w" style="background-image:linear-gradient(hsl(20,40%,21%),hsl(20,40%,21%));background-size:28.48px 100%">0000</span></div>
<div class="mr" style="top:250.5px"><span class="ma">001c0:</span><span style="padding-right:6.3px"></span><span class="w" style="background:hsl(20,40%,21%)">0000</span><span class="w" style="background:hsl(20,40%,21%)">0000</span><span class="w" style="background:hsl(20,40%,21%)">0000</span><span class="w" style="background:hsl(20,40%,21%)">0000</span><span class="w" style="background:hsl(20,40%,21%)">0000</span><span class="w" style="background:hsl(20,40%,21%)">0000</span><span class="w" style="background:hsl(20,40%,21%)">0000</span><span class="w" style="background:hsl(20,40%,21%)">0000</span><span class="w" style="background:hsl(20,40%,21%)">0000</span><span class="w" style="background:hsl(20,40%,21%)">0000</span><span class="w" style="background:hsl(20,40%,21%)">0000</span><span class="w" style="background:hsl(20,40%,21%)">0000</span><span class="w" style="background:hsl(20,40%,21%)">0000</span><span class="w" style="background:hsl(20,40%,21%)">0000</span><span class="w" style="background:hsl(20,40%,21%)">0000</span><span class="w" style="background-image:linear-gradient(hsl(20,40%,21%),hsl(20,40%,21%));background-size:28.48px 100%">0000</span><span class="w" style="background:hsl(20,40%,21%)">0000</span><span class="w" style="background:hsl(20,40%,21%)">0000</span><span class="w" style="background:hsl(20,40%,21%)">0000</span><span class="w" style="background:hsl(20,40%,21%)">0000</span><span class="w" style="background:hsl(20,40%,21%)">0000</span><span class="w" style="background:hsl(20,40%,21%)">0000</span><span class="w" style="background:hsl(20,40%,21%)">0000</span><span class="w" style="background:hsl(20,40%,21%)">0000</span><span class="w" style="background:hsl(20,40%,21%)">0000</span><span class="w" style="background:hsl(20,40%,21%)">0000</span><span class="w" style="background:hsl(20,40%,21%)">0000</span><span class="w" style="background:hsl(20,40%,21%)">0000</span><span class="w" style="background:hsl(20,40%,21%)">0000</span><span class="w" style="background:hsl(20,40%,21%)">0000</span><span class="w" style="background:hsl(20,40%,21%)">0000</span><span class="w" style="background-image:linear-gradient(hsl(20,40%,21%),hsl(20,40%,21%));background-size:28.48px 100%">0000</span></div>
<div class="mr" style="top:266.5px"><span class="ma">001e0:</span><span style="padding-right:6.3px"></span><span class="w" style="background:hsl(20,40%,21%)">0000</span><span class="w" style="background:hsl(20,40%,21%)">0000</span><span class="w" style="background-image:linear-gradient(hsl(20,40%,21%),hsl(20,40%,21%));background-size:28.48px 100%">0000</span><span class="w">0000</span><span class="w" style="background:hsl(157.5,40%,21%)">0000</span><span class="w" style="background:hsl(157.5,40%,21%)">0000</span><span class="w" style="background:hsl(157.5,40%,21%)">0000</span><span class="w" style="background:hsl(157.5,40%,21%)">0000</span><span class="w" style="background:hsl(157.5,40%,21%)">0000</span><span class="w" style="background:hsl(157.5,40%,21%)">0000</span><span class="w" style="background:hsl(157.5,40%,21%)">0000</span><span class="w" style="background:hsl(157.5,40%,21%)">0000</span><span class="w" style="background:hsl(157.5,40%,21%)">0000</span><span class="w" style="background:hsl(157.5,40%,21%)">0000</span><span class="w" style="background:hsl(157.5,40%,21%)">0000</span><span class="w" style="background-image:linear-gradient(hsl(157.5,40%,21%),hsl(157.5,40%,21%));background-size:28.48px 100%">0000</span><span class="w" style="background:hsl(157.5,40%,21%)">0000</span><span class="w" style="background:hsl(157.5,40%,21%)">0000</span><span class="w" style="background:hsl(157.5,40%,21%)">0000</span><span class="w" style="background:hsl(157.5,40%,21%)">0000</span><span class="w" style="background:hsl(157.5,40%,21%)">0000</span><span class="w" style="background:hsl(157.5,40%,21%)">0000</span><span class="w" style="background:hsl(157.5,40%,21%)">0000</span><span class="w" style="background:hsl(157.5,40%,21%)">0000</span><span class="w" style="background:hsl(157.5,40%,21%)">0000</span><span class="w" style="background:hsl(157.5,40%,21%)">0000</span><span class="w" style="background:hsl(157.5,40%,21%)">0000</span><span class="w" style="background:hsl(157.5,40%,21%)">0000</span><span class="w" style="background:hsl(157.5,40%,21%)">0000</span><span class="w" style="background:hsl(157.5,40%,21%)">0000</span><span class="w" style="background:hsl(157.5,40%,21%)">0000</span><span class="w" style="background-image:linear-gradient(hsl(157.5,40%,21%),hsl(157.5,40%,21%));background-size:28.48px 100%">0000</span></div>
<div class="mr" style="top:282.5px"><span class="ma">00200:</span><span style="padding-right:6.3px"></span><span class="w" style="background:hsl(157.5,40%,21%)">0000</span><span class="w" style="background:hsl(157.5,40%,21%)">0000</span><span class="w" style="background:hsl(157.5,40%,21%)">0000</span><span class="w" style="background:hsl(157.5,40%,21%)">0000</span><span class="w" style="background:hsl(157.5,40%,21%)">0000</span><span class="w" style="background:hsl(157.5,40%,21%)">0000</span><span class="w" style="background:hsl(157.5,40%,21%)">0000</span><span class="w" style="background:hsl(157.5,40%,21%)">0000</span><span class="w" style="background:hsl(157.5,40%,21%)">0000</span><span class="w" style="background:hsl(157.5,40%,21%)">0000</span><span class="w" style="background:hsl(157.5,40%,21%)">0000</span><span class="w" style="background-image:linear-gradient(hsl(157.5,40%,21%),hsl(157.5,40%,21%));background-size:28.48px 100%">0000</span><span class="w">0000</span><span class="w">0000</span><span class="w">0000</span><span class="w">0000</span><span class="w">0000</span><span class="w">0000</span><span class="w">0000</span><span class="w">0000</span><span class="w">0000</span><span class="w">0000</span><span class="w">0000</span><span class="w">0000</span><span class="w">0000</span><span class="w">0000</span><span class="w">0000</span><span class="w">0000</span><span class="w">0000</span><span class="w">0000</span><span class="w">0000</span><span class="w">0000</span></div>
<div class="mr" style="top:298.5px"><span class="ma">00220:</span><span style="padding-right:6.3px"></span><span class="w">0000</span><span class="w">0000</span><span class="w">0000</span><span class="w">0000</span><span class="w">0000</span><span class="w">0000</span><span class="w">0000</span><span class="w">0000</span><span class="w">0000</span><span class="w">0000</span><span class="w">0000</span><span class="w">0000</span><span class="w">0000</span><span class="w">0000</span><span class="w">0000</span><span class="w">0000</span><span class="w">0000</span><span class="w">0000</span><span class="w">0000</span><span class="w">0000</span><span class="w">0000</span><span class="w">0000</span><span class="w">0000</span><span class="w">0000</span><span class="w">0000</span><span class="w">0000</span><span class="w">0000</span><span class="w">0000</span><span class="w">0000</span><span class="w">0000</span><span class="w">0000</span><span class="w">0000</span></div>
<div class="mr" style="top:314.5px"><span class="ma">00240:</span><span style="padding-right:6.3px"></span><span class="w">0000</span><span class="w">0000</span><span class="w">0000</span><span class="w">0000</span><span class="w">0000</span><span class="w">0000</span><span class="w">0000</span><span class="w">0000</span><span class="w">0000</span><span class="w">0000</span><span class="w">0000</span><span class="w">0000</span><span class="w">0000</span><span class="w">0000</span><span class="w">0000</span><span class="w">0000</span><span class="w">0000</span><span class="w">0000</span><span class="w">0000</span><span class="w">0000</span><span class="w">0000</span><span class="w">0000</span><span class="w">0000</span><span class="w">0000</span><span class="w">0000</span><span class="w">0000</span><span class="w">0000</span><span class="w">0000</span><span class="w">0000</span><span class="w">0000</span><span class="w">0000</span><span class="w">0000</span></div>
<div class="mr" style="top:330.5px"><span class="ma">00260:</span><span style="padding-right:6.3px"></span><span class="w">0000</span><span class="w">0000</span><span class="w">0000</span><span class="w">0000</span><span class="w">0000</span><span class="w">0000</span><span class="w">0000</span><span class="w">0000</span><span class="w">0000</span><span class="w">0000</span><span class="w">0000</span><span class="w">0000</span><span class="w">0000</span><span class="w">0000</span><span class="w">0000</span><span class="w">0000</span><span class="w">0000</span><span class="w">0000</span><span class="w">0000</span><span class="w">0000</span><span class="w">0000</span><span class="w">0000</span><span class="w">0000</span><span class="w">0000</span><span class="w">0000</span><span class="w">0000</span><span class="w">0000</span><span class="w">0000</span><span class="w">0000</span><span class="w">0000</span><span class="w">0000</span><span class="w">0000</span></div>
<div class="mr" style="top:346.5px"><span class="ma">00280:</span><span style="padding-right:6.3px"></span><span class="w">0000</span><span class="w">0000</span><span class="w">0000</span><span class="w">0000</span><span class="w">0000</span><span class="w">0000</span><span class="w">0000</span><span class="w">0000</span><span class="w">0000</span><span class="w">0000</span><span class="w">0000</span><span class="w">0000</span><span class="w">0000</span><span class="w">0000</span><span class="w">0000</span><span class="w">0000</span><span class="w">0000</span><span class="w">0000</span><span class="w">0000</span><span class="w">0000</span><span class="w">0000</span><span class="w">0000</span><span class="w">0000</span><span class="w">0000</span><span class="w">0000</span><span class="w">0000</span><span class="w">0000</span><span class="w">0000</span><span class="w">0000</span><span class="w">0000</span><span class="w">0000</span><span class="w">0000</span></div>
<div class="mr" style="top:362.5px"><span class="ma">002a0:</span><span style="padding-right:6.3px"></span><span class="w">0000</span><span class="w">0000</span><span class="w">0000</span><span class="w">0000</span><span class="w">0000</span><span class="w">0000</span><span class="w">0000</span><span class="w">0000</span><span class="w">0000</span><span class="w">0000</span><span class="w">0000</span><span class="w">0000</span><span class="w">0000</span><span class="w">0000</span><span class="w">0000</span><span class="w">0000</span><span class="w">0000</span><span class="w">0000</span><span class="w">0000</span><span class="w">0000</span><span class="w">0000</span><span class="w">0000</span><span class="w">0000</span><span class="w">0000</span><span class="w">0000</span><span class="w">0000</span><span class="w">0000</span><span class="w">0000</span><span class="w">0000</span><span class="w">0000</span><span class="w">0000</span><span class="w">0000</span></div>
</div>
<div class="abs" style="left:1697px;top:473px;width:3px;height:400px;background:#333"></div>
<div class="pane" id="secs" style="left:1700px;top:473px;width:100px;height:400px">
<div class="ttl" style="left:4px;top:-2px;font-size:9px">SECTIONS</div><div class="ul" style="left:4px;top:13px;width:96px"></div>
<div class="sec" style="top:17px;background:hsl(0,40%,21%)">00140 #QCASPV</div>
<div class="sec" style="top:36px;background:hsl(137.5,40%,21%)">00142 #QCASV</div>
<div class="sec" style="top:55px;background:hsl(275,40%,21%)">00144 #QCOUT</div>
<div class="sec" style="top:74px;background:hsl(52.5,40%,21%)">00146 #QIOINIT</div>
<div class="sec" style="top:93px;background:hsl(190,40%,21%)">00148 #QOUTER1</div>
<div class="sec" style="top:112px;background:hsl(327.5,40%,21%)">0014a #DHELLOW</div>
<div class="sec" style="top:131px;background:hsl(105,40%,21%)">00158 #EHELLOW</div>
<div class="sec" style="top:150px;background:hsl(242.5,40%,21%)">0015e #LCASPV</div>
<div class="sec" style="top:169px;background:hsl(20,40%,21%)">00160 #LIOINIT</div>
<div class="sec" style="top:188px;background:hsl(157.5,40%,21%)">001e4 @0HELLOW</div>
<div class="sec" style="top:207px;background:hsl(295,40%,21%)">10000 $0HELLOW</div>
<div class="sec" style="top:226px;background:hsl(72.5,40%,21%)">10012 CASPV</div>
<div class="sec" style="top:245px;background:hsl(210,40%,21%)">10052 CASV</div>
<div class="sec" style="top:264px;background:hsl(347.5,40%,21%)">1006e COUTP</div>
<div class="sec" style="top:283px;background:hsl(125,40%,21%)">10082 IOINIT</div>
<div class="sec" style="top:302px;background:hsl(262.5,40%,21%)">100d8 START</div>
</div>
<div class="abs" style="left:0;top:873px;width:1800px;height:3px;background:#333"></div>
<div class="pane" id="term" style="left:0;top:876px;width:1800px;height:150px;background:#0c0c0c">
<div class="ttl" style="left:8px;top:7px;color:#aaaa00;font-weight:bold">TERMINAL</div><div class="ul" style="left:8px;top:22px;width:48px;background:#333"></div>
<div class="sb" style="left:60px;top:6px;width:32px;line-height:18px;background:#333;border-color:#666;color:#ccc">CLR</div>
<div class="abs" style="left:1700.5px;top:9px;width:12px;height:12px;background:#fff;border-radius:2.5px"></div>
<div class="lbl" style="right:8px;top:9px;color:#aaa;font-size:9px">BREAK on INPUT</div>
<div class="abs" style="left:8px;top:26px;width:1784px;height:96px;background:#000;border:1px solid #3c3c3c"></div>
<div class="abs" style="left:8px;top:124px;width:1784px;height:22px;background:#111;border:1px solid #444;color:#7a7a7a;font-size:12px;line-height:20px;padding-left:4px;white-space:pre">(waiting for program input...)</div>
</div>
</div></body></html>
